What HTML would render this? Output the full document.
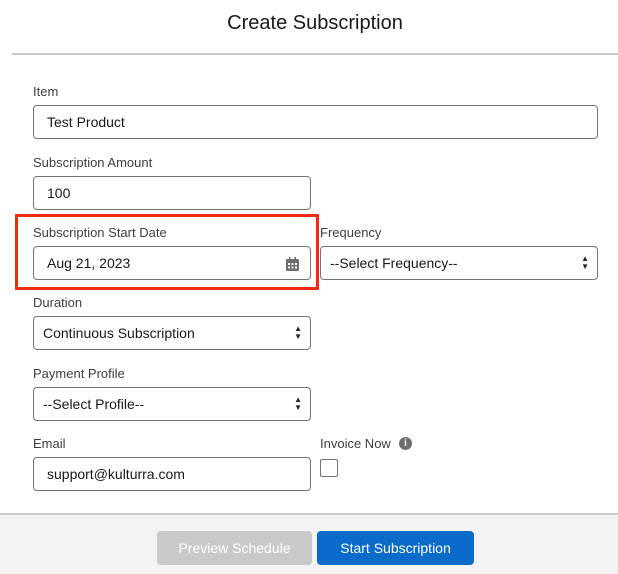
<!DOCTYPE html>
<html><head><style>
*{box-sizing:border-box;margin:0;padding:0}
body{width:618px;height:574px;background:#fff;font-family:"Liberation Sans",sans-serif;position:relative;overflow:hidden;color:#181818}
.a{position:absolute}
.title{left:0;width:630px;top:12px;text-align:center;font-size:20px;color:#181818}
.hr{left:12px;right:0;top:53px;height:2px;background:#c9c9c9}
.lbl{font-size:13px;color:#3e3e3c}
.inp{border:1px solid #747474;border-radius:4px;height:34px;font-size:14px;padding:0 0 0 13px;line-height:32px;background:#fff}
.sel{padding-left:9px}
.arr{position:absolute;right:8px;top:8px;font-size:8px;line-height:8px;color:#222}
.foot{left:0;right:0;top:513px;bottom:0;background:#f3f3f3;border-top:2px solid #c9c9c9}
.btn{height:34px;border-radius:4px;font-size:14px;text-align:center;line-height:35px;color:#fff}
</style></head><body>
<div class="a title">Create Subscription</div>
<div class="a hr"></div>

<div class="a lbl" style="left:33px;top:84px">Item</div>
<div class="a inp" style="left:33px;top:105px;width:565px">Test Product</div>

<div class="a lbl" style="left:33px;top:155px">Subscription Amount</div>
<div class="a inp" style="left:33px;top:176px;width:278px">100</div>

<div class="a" style="left:15px;top:214px;width:304px;height:76px;border:3px solid #f22a12"></div>
<div class="a lbl" style="left:33px;top:225px">Subscription Start Date</div>
<div class="a inp" style="left:33px;top:246px;width:278px">Aug 21, 2023
<svg class="a" style="right:11px;top:10px" width="13" height="14" viewBox="0 0 13 14"><rect x="0" y="2" width="13" height="12" rx="1" fill="#706e6b"/><rect x="3" y="0" width="1.5" height="3" fill="#706e6b"/><rect x="8.5" y="0" width="1.5" height="3" fill="#706e6b"/><g fill="#fff"><rect x="2" y="6" width="2" height="2"/><rect x="5.5" y="6" width="2" height="2"/><rect x="9" y="6" width="2" height="2"/><rect x="2" y="9.5" width="2" height="2"/><rect x="5.5" y="9.5" width="2" height="2"/><rect x="9" y="9.5" width="2" height="2"/></g></svg></div>

<div class="a lbl" style="left:320px;top:225px">Frequency</div>
<div class="a inp sel" style="left:320px;top:246px;width:278px">--Select Frequency--<div class="arr">▲<br>▼</div></div>

<div class="a lbl" style="left:33px;top:295px">Duration</div>
<div class="a inp sel" style="left:33px;top:316px;width:278px">Continuous Subscription<div class="arr">▲<br>▼</div></div>

<div class="a lbl" style="left:33px;top:366px">Payment Profile</div>
<div class="a inp sel" style="left:33px;top:387px;width:278px">--Select Profile--<div class="arr">▲<br>▼</div></div>

<div class="a lbl" style="left:33px;top:436px">Email</div>
<div class="a inp" style="left:33px;top:457px;width:278px">support@kulturra.com</div>

<div class="a lbl" style="left:320px;top:436px">Invoice Now</div>
<div class="a" style="left:399px;top:437px;width:13px;height:13px;border-radius:50%;background:#706e6b;color:#fff;font-size:10px;font-weight:bold;text-align:center;line-height:13px">i</div>
<div class="a" style="left:320px;top:459px;width:18px;height:18px;border:1px solid #747474;border-radius:2px"></div>

<div class="a foot"></div>
<div class="a btn" style="left:157px;top:531px;width:155px;background:#c9c9c9">Preview Schedule</div>
<div class="a btn" style="left:317px;top:531px;width:157px;background:#0b6bcb">Start Subscription</div>
</body></html>
